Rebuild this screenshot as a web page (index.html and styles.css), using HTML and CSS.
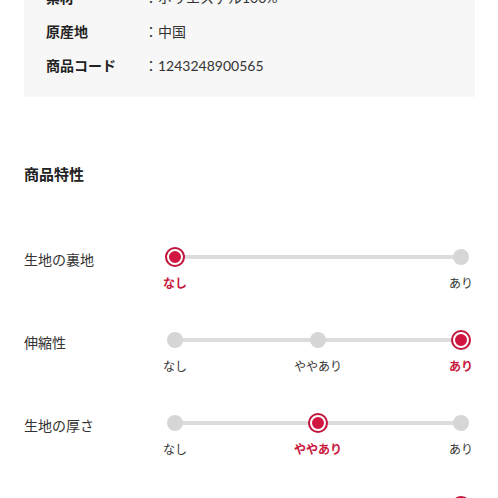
FILE: index.html
```html
<!DOCTYPE html>
<html lang="ja">
<head>
<meta charset="utf-8">
<link rel="stylesheet" href="styles.css">
</head>
<body>
<div class="page">
  <div class="specbox">
    <div class="specrow"><span class="speck">素材</span><span class="specv">：ポリエステル100%</span></div>
    <div class="specrow"><span class="speck">原産地</span><span class="specv">：中国</span></div>
    <div class="specrow"><span class="speck">商品コード</span><span class="specv">：1243248900565</span></div>
  </div>

  <h2 class="heading">商品特性</h2>

  <div class="feature">
    <div class="flabel">生地の裏地</div>
    <div class="scale">
      <div class="stops">
        <div class="stop on"><span class="dot"></span><span class="slabel">なし</span></div>
        <div class="stop"><span class="dot"></span><span class="slabel">あり</span></div>
      </div>
    </div>
  </div>

  <div class="feature">
    <div class="flabel">伸縮性</div>
    <div class="scale">
      <div class="stops">
        <div class="stop"><span class="dot"></span><span class="slabel">なし</span></div>
        <div class="stop"><span class="dot"></span><span class="slabel">ややあり</span></div>
        <div class="stop on"><span class="dot"></span><span class="slabel">あり</span></div>
      </div>
    </div>
  </div>

  <div class="feature">
    <div class="flabel">生地の厚さ</div>
    <div class="scale">
      <div class="stops">
        <div class="stop"><span class="dot"></span><span class="slabel">なし</span></div>
        <div class="stop on"><span class="dot"></span><span class="slabel">ややあり</span></div>
        <div class="stop"><span class="dot"></span><span class="slabel">あり</span></div>
      </div>
    </div>
  </div>

  <div class="feature">
    <div class="flabel">透け感</div>
    <div class="scale">
      <div class="stops">
        <div class="stop"><span class="dot"></span><span class="slabel">なし</span></div>
        <div class="stop"><span class="dot"></span><span class="slabel">ややあり</span></div>
        <div class="stop on"><span class="dot"></span><span class="slabel">あり</span></div>
      </div>
    </div>
  </div>
</div>
</body>
</html>
```

FILE: styles.css
```css
html, body {
  margin: 0;
  padding: 0;
  background: #fff;
}
body {
  font-family: Lato, "Noto Sans CJK JP", sans-serif;
  color: #333;
  overflow: hidden;
}
.page {
  padding: 0 23px 0 24px;
}
.specbox {
  background: #f7f7f7;
  margin-top: -38px;
  padding: 18px 22px 15px 22px;
}
.specrow {
  display: flex;
  height: 34px;
  align-items: center;
  font-size: 14px;
}
.speck {
  width: 98px;
  font-weight: bold;
  color: #222;
}
.specv {
  color: #333;
}
.heading {
  margin: 66px 0 0 0;
  font-size: 15px;
  line-height: 22px;
  font-weight: bold;
  color: #222;
}
.heading + .feature {
  margin-top: 62px;
}
.feature {
  display: flex;
  height: 83px;
}
.flabel {
  width: 139px;
  font-size: 14px;
  line-height: 20px;
  margin-top: 3px;
  color: #333;
}
.scale {
  width: 310px;
  padding: 0 12px;
  box-sizing: border-box;
}
.stops {
  position: relative;
  display: flex;
  justify-content: space-between;
}
.stops::before {
  content: "";
  position: absolute;
  left: 0;
  right: 0;
  top: 8px;
  height: 4px;
  background: #dcdcdc;
}
.stop {
  width: 0;
  display: flex;
  flex-direction: column;
  align-items: center;
  position: relative;
}
.dot {
  width: 16px;
  height: 16px;
  margin: 2px 0;
  border-radius: 50%;
  background: #d6d6d6;
  flex: none;
}
.stop.on .dot {
  width: 12px;
  height: 12px;
  margin: 2px 0;
  background: #d11641;
  border: 2px solid #fff;
  box-shadow: 0 0 0 2px #c0143a;
  box-sizing: content-box;
}
.slabel {
  margin-top: 8px;
  font-size: 12px;
  line-height: 18px;
  white-space: nowrap;
  color: #333;
}
.stop.on .slabel {
  color: #c8183e;
  font-weight: bold;
}
```
